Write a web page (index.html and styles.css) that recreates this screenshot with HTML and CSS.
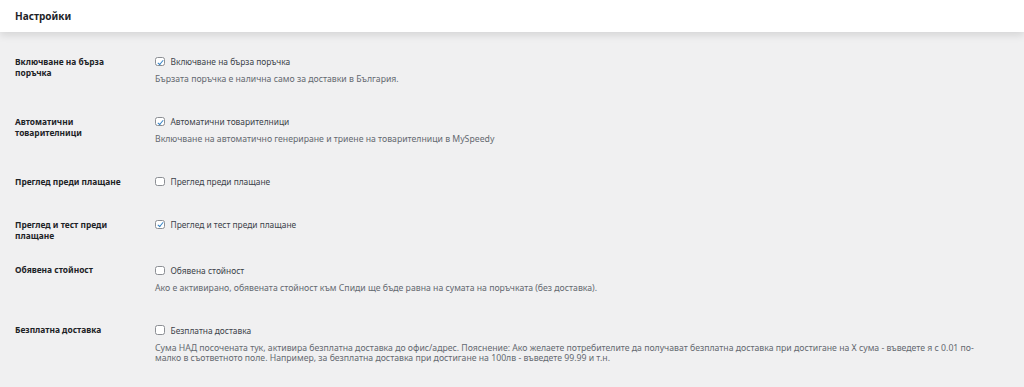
FILE: index.html
```html
<!DOCTYPE html>
<html lang="bg">
<head>
<meta charset="utf-8">
<title>Настройки</title>
<link rel="stylesheet" href="styles.css">
</head>
<body>
<header class="topbar">
  <h1 class="title">Настройки</h1>
</header>
<main class="settings">
  <div class="row">
    <div class="th">Включване на бърза поръчка</div>
    <div class="td">
      <label class="check"><span class="box checked"></span>Включване на бърза поръчка</label>
      <p class="desc">Бързата поръчка е налична само за доставки в България.</p>
    </div>
  </div>
  <div class="row">
    <div class="th">Автоматични товарителници</div>
    <div class="td">
      <label class="check"><span class="box checked"></span>Автоматични товарителници</label>
      <p class="desc">Включване на автоматично генериране и триене на товарителници в MySpeedy</p>
    </div>
  </div>
  <div class="row">
    <div class="th">Преглед преди плащане</div>
    <div class="td">
      <label class="check"><span class="box"></span>Преглед преди плащане</label>
    </div>
  </div>
  <div class="row">
    <div class="th">Преглед и тест преди плащане</div>
    <div class="td">
      <label class="check"><span class="box checked"></span>Преглед и тест преди плащане</label>
    </div>
  </div>
  <div class="row">
    <div class="th">Обявена стойност</div>
    <div class="td">
      <label class="check"><span class="box"></span>Обявена стойност</label>
      <p class="desc">Ако е активирано, обявената стойност към Спиди ще бъде равна на сумата на поръчката (без доставка).</p>
    </div>
  </div>
  <div class="row">
    <div class="th">Безплатна доставка</div>
    <div class="td">
      <label class="check"><span class="box"></span>Безплатна доставка</label>
      <p class="desc">Сума НАД посочената тук, активира безплатна доставка до офис/адрес. Пояснение: Ако желаете потребителите да получават безплатна доставка при достигане на Х сума - въведете я с 0.01 по-малко в съответното поле. Например, за безплатна доставка при достигане на 100лв - въведете 99.99 и т.н.</p>
    </div>
  </div>
</main>
</body>
</html>
```
FILE: styles.css
```css
* { box-sizing: border-box; }
html, body {
  margin: 0;
  padding: 0;
  background: #f0f0f1;
  font-family: "Noto Sans", "Open Sans", sans-serif;
  color: #3c434a;
  overflow: hidden;
}
.topbar {
  height: 32px;
  background: #fff;
  box-shadow: 0 3px 8px rgba(0, 0, 0, 0.12);
  display: flex;
  align-items: center;
  padding: 0 15px;
  position: relative;
}
.title {
  margin: 0;
  font-size: 10px;
  font-weight: 700;
  color: #1d2327;
}
.settings {
  padding: 12.5px 38px 0 15px;
}
.row {
  display: grid;
  grid-template-columns: 140px 1fr;
}
.th {
  padding: 11.4px 26px 11.4px 0;
  font-size: 8.4px;
  line-height: 11.6px;
  font-weight: 700;
  color: #1d2327;
}
.td {
  padding: 11.4px 0 19.7px 0;
}
.check {
  display: flex;
  align-items: center;
  height: 11.6px;
  font-size: 8.4px;
  color: #3c434a;
}
.box {
  width: 9.5px;
  height: 9.5px;
  border: 1px solid #8c8f94;
  border-radius: 2.5px;
  background: #fff;
  margin-right: 6px;
  flex: none;
  position: relative;
}
.box.checked::after {
  content: "";
  position: absolute;
  left: 2.6px;
  top: 0.6px;
  width: 2.4px;
  height: 5px;
  border: solid #3582c4;
  border-width: 0 1px 1px 0;
  transform: rotate(40deg);
}
.desc {
  margin: 6.5px 0 0 0;
  font-size: 8.7px;
  line-height: 10.8px;
  color: #646970;
}
```
